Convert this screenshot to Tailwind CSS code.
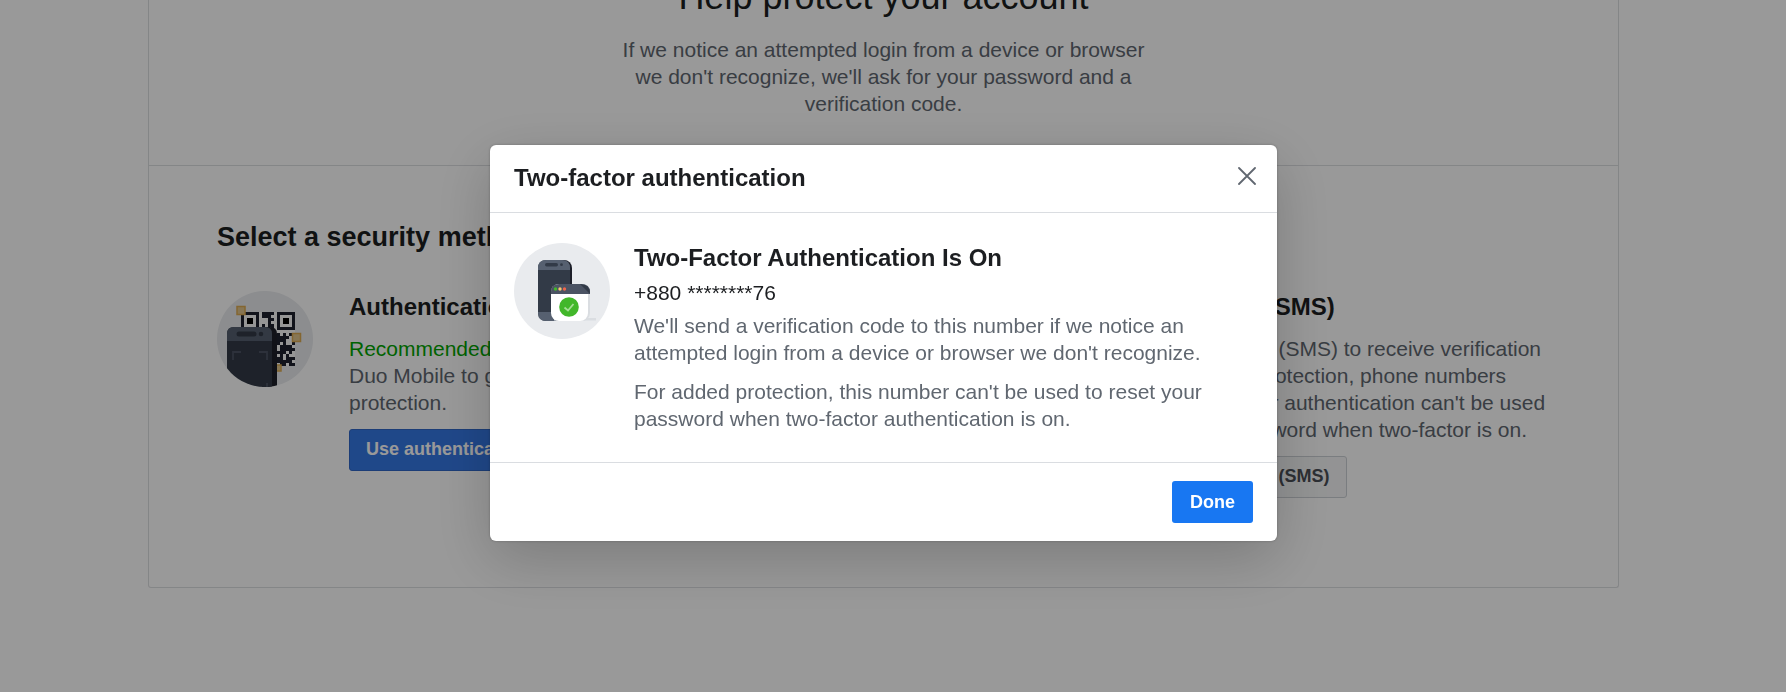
<!DOCTYPE html>
<html lang="en">
<head>
<meta charset="utf-8">
<title>Two-factor authentication</title>
<script src="https://cdn.jsdelivr.net/npm/@tailwindcss/browser@4"></script>
</head>
<body class="min-h-screen overflow-hidden bg-white font-['Liberation_Sans',Arial,sans-serif] text-[21px] leading-[27px] text-[#606770]">

<!-- Settings page behind the dialog; the right padding is the scrollbar gutter -->
<div class="pr-[19px]">
  <main class="mx-[148px] -mt-6 rounded-b-[3px] border border-t-0 border-[#dddfe2]">
    <section class="flex flex-col items-center border-b border-[#dddfe2] pb-12 text-center">
      <h1 class="text-[36px] leading-[42px] text-[#1c1e21]">Help protect your account</h1>
      <p class="mt-[18px] max-w-[540px]">If we notice an attempted login from a device or browser we don't recognize, we'll ask for your password and a verification code.</p>
    </section>

    <section class="px-[68px] pt-[55px] pb-[89px]">
      <h2 class="text-[27px] leading-[33px] font-bold text-[#1c1e21]">Select a security method</h2>
      <div class="mt-[37px] grid grid-cols-2 items-start">

        <article class="flex gap-9">
          <svg class="size-24 shrink-0" viewBox="0 0 96 96" aria-hidden="true">
            <clipPath id="disc"><circle cx="48" cy="48" r="48"/></clipPath>
            <g clip-path="url(#disc)">
              <rect width="96" height="96" fill="#e9ebee"/>
              <rect x="24" y="21" width="54" height="54" fill="#fafafa"/>
              <g fill="#1d212e">
                <path fill-rule="evenodd" d="M24 21h18v18h-18zM27 24v12h12v-12z"/>
                <path fill-rule="evenodd" d="M60 21h18v18h-18zM63 24v12h12v-12z"/>
                <path d="M45 21h9v6h3v3h-3v3h3v3h-6v-9h-6zM45 33h3v3h3v3h-6zM54 24h3v-3h-3zM54 36h3v3h-3z"/>
                <path d="M60 42h3v3h3v-3h3v3h3v3h-3v3h-9zM72 42h3v3h-3zM60 51h3v3h-3zM66 51h3v3h3v3h-3v3h-3v-3h-3v-3h3zM75 51h3v3h-3zM69 57h3v-3h3v3h3v3h-3v3h-3v-3h-3zM60 60h3v-3h3v3h3v3h-3v3h-3v-3h-3zM69 63h3v3h-3zM75 57h3v3h-3zM60 66h6v3h3v-3h9v3h-3v3h3v3h-6v-3h-3v3h-3v-3h-6zM75 72h3v3h-3zM63 72h3v3h-3z"/>
              </g>
              <g fill="#000"><rect x="30" y="27" width="6" height="6"/><rect x="66" y="27" width="6" height="6"/></g>
              <g fill="#e2c58c" stroke="#dcab52" stroke-width="1.500">
                <rect x="20" y="15.500" width="8" height="8"/><rect x="75.500" y="42.500" width="8" height="8"/><rect x="57" y="74" width="7" height="6"/>
              </g>
              <path d="M22 36h31q7 0 7 7v60h-12z" fill="#1d1f29"/>
              <path d="M10 43q0-7 7-7h31q7 0 7 7v60h-45z" fill="#323a47"/>
              <path d="M10 50v-7q0-7 7-7h31q7 0 7 7v7z" fill="#566070"/>
              <rect x="19.500" y="40.500" width="20" height="5" rx="2.500" fill="#323a47"/><circle cx="44" cy="43" r="2.300" fill="#323a47"/>
              <path d="M16 69v-8h8M42 61h8v8M50 92v6" fill="none" stroke="#4b5363" stroke-width="1.800"/>
            </g>
          </svg>
          <div>
            <h3 class="text-2xl leading-8 font-bold text-[#1c1e21]">Authentication app</h3>
            <p class="mt-3"><span class="text-[#00a400]">Recommended</span> · Use an app like Google Authenticator or Duo Mobile to generate verification codes for more protection.</p>
            <button type="button" class="mt-[13px] h-[42px] rounded-[3px] border border-[#2f67c6] bg-[#3578e5] px-4 pb-0.5 text-lg leading-none font-bold text-white">Use authentication app</button>
          </div>
        </article>

        <article class="flex gap-9 pl-[89px]">
          <svg class="size-24 shrink-0" viewBox="0 0 96 96" aria-hidden="true">
            <circle cx="48" cy="48" r="48" fill="#e9ebee"/>
            <rect x="28" y="18" width="34" height="60" rx="7" fill="#323a47"/>
            <path d="M44 36h28v18h-16l-6 6v-6h-6z" fill="#fff"/>
          </svg>
          <div>
            <h3 class="text-2xl leading-8 font-bold text-[#1c1e21]">Text Message (SMS)</h3>
            <p class="mt-3">Use text message (SMS) to receive verification codes. For your protection, phone numbers used for two-factor authentication can't be used to reset your password when two-factor is on.</p>
            <button type="button" class="mt-[13px] h-[42px] rounded-[3px] border border-[#ccd0d5] bg-[#f5f6f7] px-4 pb-0.5 text-lg leading-none font-bold text-[#4b4f56]">Use text message (SMS)</button>
          </div>
        </article>
      </div>
    </section>
  </main>
</div>

<!-- Dialog -->
<div class="fixed inset-0 flex items-start justify-center bg-black/40 pt-[145px] pr-[19px]">
  <div role="dialog" aria-modal="true" aria-labelledby="dialog-title" class="w-full max-w-[787px] rounded-md bg-white shadow-[0_18px_60px_rgba(0,0,0,0.2),0_0_3px_rgba(0,0,0,0.25)]">
    <header class="flex items-start justify-between border-b border-[#dadde1] pt-[18px] pr-[21px] pb-[19px] pl-6">
      <h2 id="dialog-title" class="text-2xl leading-[30px] font-bold text-[#1c1e21]">Two-factor authentication</h2>
      <button type="button" aria-label="Close" class="mt-1 text-[#606770]">
        <svg class="size-[18px]" viewBox="0 0 18 18" fill="none" stroke="currentColor" stroke-width="1.800" stroke-linecap="round"><path d="M1 1L17 17M17 1L1 17"/></svg>
      </button>
    </header>
    <div class="flex items-start gap-6 px-6 py-[30px]">
      <svg class="size-24 shrink-0" viewBox="0 0 96 96" aria-hidden="true">
        <circle cx="48" cy="48" r="48" fill="#e9ebee"/>
        <rect x="28" y="17" width="30" height="61" rx="8" fill="#1d1f29"/>
        <rect x="24" y="17" width="32" height="61" rx="8" fill="#323a47"/>
        <path d="M24 27v-2q0-8 8-8h16q8 0 8 8v2z" fill="#566070"/>
        <path d="M24 69h32v9h-24q-8 0-8-8z" fill="#566070"/>
        <rect x="31" y="20" width="13" height="3.500" rx="1.700" fill="#323a47"/><circle cx="47.500" cy="21.700" r="1.400" fill="#323a47"/>
        <path d="M40 75h42v2.500h-42z" fill="#dadde1"/>
        <rect x="40" y="41" width="36" height="37" rx="8" fill="#dadde1"/>
        <rect x="37" y="41" width="37" height="37" rx="8" fill="#fff"/>
        <path d="M37 51v-2q0-8 8-8h22q9 0 9 8v2z" fill="#4b5363"/>
        <path d="M66 41q10 0 10 10z" fill="#323a47"/>
        <circle cx="41.500" cy="46" r="1.700" fill="#42b72a"/><circle cx="46" cy="46" r="1.700" fill="#f7c873"/><circle cx="50.500" cy="46" r="1.700" fill="#f0644b"/>
        <circle cx="55" cy="64" r="9.800" fill="#42b72a"/>
        <path d="M50.500 64.500l3.500 3 5.500-6.500" fill="none" stroke="#a5df95" stroke-width="1.800"/>
      </svg>
      <div class="min-w-0 flex-1">
        <h3 class="text-2xl leading-[30px] font-bold text-[#1c1e21]">Two-Factor Authentication Is On</h3>
        <p class="mt-1.5 text-[#1c1e21]">+880 ********76</p>
        <p class="mt-1.5">We'll send a verification code to this number if we notice an attempted login from a device or browser we don't recognize.</p>
        <p class="mt-3">For added protection, this number can't be used to reset your password when two-factor authentication is on.</p>
      </div>
    </div>
    <footer class="flex justify-end border-t border-[#dadde1] px-6 py-[18px]">
      <button type="button" class="h-[42px] rounded-[3px] bg-[#1877f2] px-[18px] text-lg leading-none font-bold text-white">Done</button>
    </footer>
  </div>
</div>
</body>
</html>
